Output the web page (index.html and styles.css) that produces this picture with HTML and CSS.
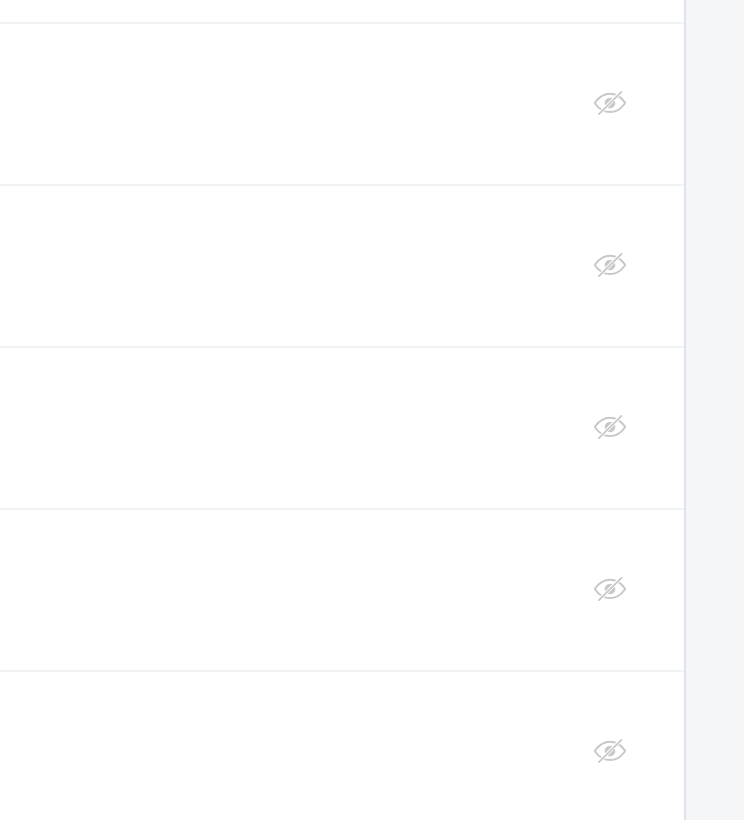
FILE: index.html
```html
<!DOCTYPE html>
<html lang="en">
<head>
<meta charset="utf-8">
<title>List</title>
<link rel="stylesheet" href="styles.css">
</head>
<body>
<svg class="defs" aria-hidden="true">
  <mask id="slash-gap" maskUnits="userSpaceOnUse" x="0" y="0" width="32" height="26">
    <rect width="32" height="26" fill="#fff"/>
    <path d="M2.500 26.500 30-1" stroke="#000" stroke-width="3.600"/>
  </mask>
  <symbol id="eye-off" viewBox="0 0 32 26">
    <g mask="url(#slash-gap)">
      <path d="M1.500 12C4.500 7.800 9.500 3.700 16 3.700S27.500 7.800 30.500 12Q31.400 13 30.500 14C27.500 18.200 22.500 22.100 16 22.100S4.500 18.200 1.500 14Q.6 13 1.500 12Z" fill="none" stroke="currentColor" stroke-width="2" stroke-linejoin="round"/>
      <circle cx="16" cy="13" r="5.300" fill="currentColor"/>
    </g>
    <path d="M4.900 24.100 27.500 1.900" stroke="currentColor" stroke-width="1.800" stroke-linecap="round"/>
  </symbol>
</svg>
<div class="page">
  <main class="list">
    <div class="row row-first"></div>
    <div class="row"><svg class="icon"><use href="#eye-off"/></svg></div>
    <div class="row"><svg class="icon"><use href="#eye-off"/></svg></div>
    <div class="row"><svg class="icon"><use href="#eye-off"/></svg></div>
    <div class="row"><svg class="icon"><use href="#eye-off"/></svg></div>
    <div class="row"><svg class="icon"><use href="#eye-off"/></svg></div>
  </main>
  <aside class="gutter"></aside>
</div>
</body>
</html>
```
FILE: styles.css
```css
* { box-sizing: border-box; }
body { margin: 0; background: #fff; }
.defs {
  position: absolute;
  width: 0;
  height: 0;
}
.page {
  display: flex;
  height: 820px;
  overflow: hidden;
}
.list {
  flex: 1;
  background: #fff;
  border-right: 2px solid #dfe4ec;
}
.row {
  display: flex;
  align-items: center;
  justify-content: flex-end;
  height: 162px;
  padding: 0 58px 2px 0;
  border-bottom: 2px solid #f0f2f6;
}
.row-first { height: 24px; }
.icon {
  width: 32px;
  height: 26px;
  color: #c8c8c8;
}
.gutter {
  width: 58px;
  background: #f3f5f7;
}
```
